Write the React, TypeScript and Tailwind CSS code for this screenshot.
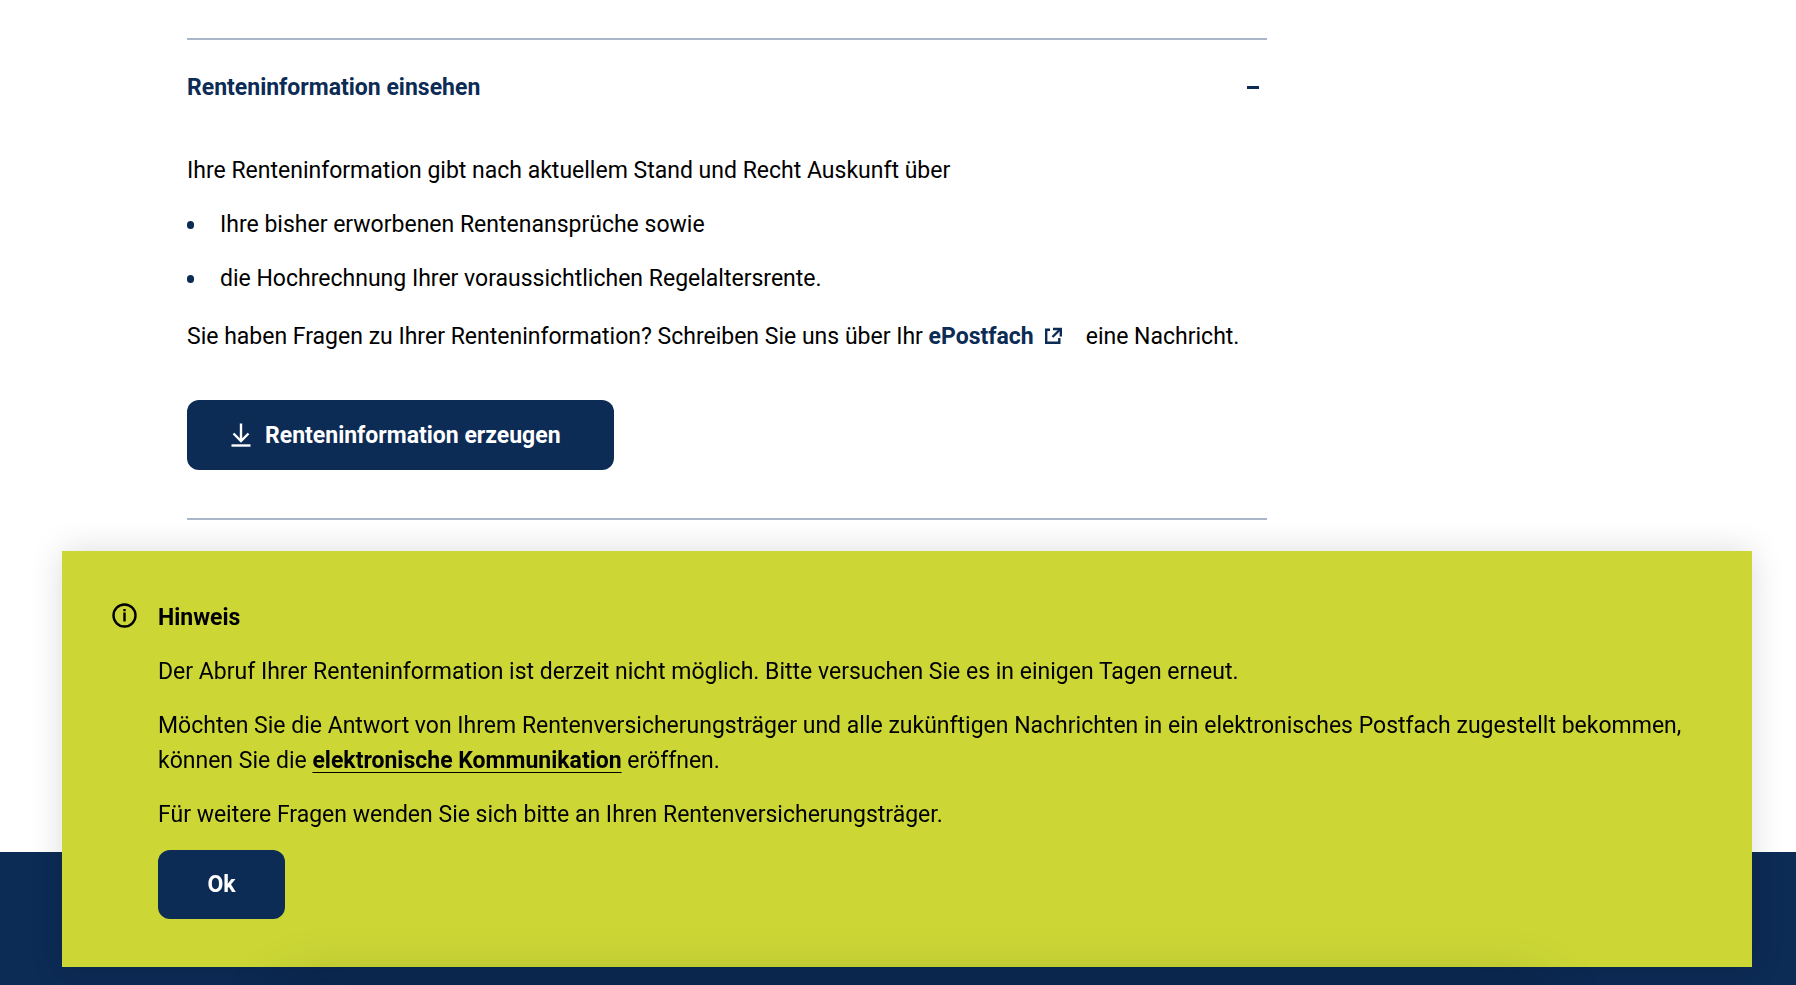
import React from 'react';

function ExternalLinkIcon() {
  return (
    <svg className="mr-6 ml-2.5 inline-block size-[18px] align-[-1px]" viewBox="0 0 18 18" fill="none" stroke="currentColor" strokeWidth="2.4" aria-hidden="true">
      <path d="M6 2.7H2.2V15.8H15.3V11" />
      <path d="M9 2h7.8v7.5" />
      <path d="M16.5 2L8.500 10" />
    </svg>
  );
}

function DownloadIcon() {
  return (
    <svg className="h-6 w-5 shrink-0" viewBox="0 0 20 24" fill="none" stroke="currentColor" strokeWidth="2.4" aria-hidden="true">
      <path d="M10 .5v17.5" />
      <path d="M2.5 10.5L10 18l7.5-7.5" />
      <path d="M.5 22.500h19" />
    </svg>
  );
}

function InfoIcon() {
  return (
    <svg className="mt-[3px] size-[25px] shrink-0" viewBox="0 0 25 25" fill="none" stroke="currentColor" strokeWidth="2.4" aria-hidden="true">
      <circle cx="12.5" cy="12.5" r="11" />
      <path d="M12.5 9.5v9M12.5 6v2.2" />
    </svg>
  );
}

export default function App() {
  return (
    <div className="flex min-h-screen flex-col bg-white font-['Roboto',sans-serif] text-[23px] leading-[35px] text-black">
      <main className="grow px-[187px] pt-[38px]">
        <section className="max-w-[1080px] border-y-2 border-[#a9b6c8] pb-12">
          <h2>
            <button
              type="button"
              aria-expanded="true"
              className="flex w-full items-center justify-between pt-[30px] pr-2 pb-12 text-left font-bold text-[#0c2b55]"
            >
              Renteninformation einsehen
              <span className="h-[3px] w-3 bg-[#0c2b55]" />
            </button>
          </h2>
          <p>Ihre Renteninformation gibt nach aktuellem Stand und Recht Auskunft über</p>
          <ul className="mt-[19px] space-y-[19px]">
            <li className="flex items-center gap-[26px]">
              <span className="h-2 w-[7px] rounded-full bg-[#0c2b55]" />
              Ihre bisher erworbenen Rentenansprüche sowie
            </li>
            <li className="flex items-center gap-[26px]">
              <span className="h-2 w-[7px] rounded-full bg-[#0c2b55]" />
              die Hochrechnung Ihrer voraussichtlichen Regelaltersrente.
            </li>
          </ul>
          <p className="mt-[23px]">
            Sie haben Fragen zu Ihrer Renteninformation? Schreiben Sie uns über Ihr{' '}
            <a href="#epostfach" className="font-bold text-[#0c2b55]">
              ePostfach
              <ExternalLinkIcon />
            </a>
            eine Nachricht.
          </p>
          <button
            type="button"
            className="mt-[46px] flex h-[70px] items-center gap-3.5 rounded-xl bg-[#0c2b55] pr-[53px] pl-11 font-bold text-white"
          >
            <DownloadIcon />
            Renteninformation erzeugen
          </button>
        </section>
      </main>

      <footer className="h-[133px] bg-[#0c2b55]" />

      {/* Notice overlay */}
      <aside
        role="alertdialog"
        aria-labelledby="hinweis-title"
        className="fixed right-11 bottom-[18px] left-[62px] flex gap-[21px] bg-[#ccd736] px-[50px] pt-[49px] pb-12 shadow-[0_0_32px_rgba(0,0,0,0.14)]"
      >
        <InfoIcon />
        <div>
          <h2 id="hinweis-title" className="font-bold">Hinweis</h2>
          <p className="mt-[19px]">
            Der Abruf Ihrer Renteninformation ist derzeit nicht möglich. Bitte versuchen Sie es in einigen Tagen erneut.
          </p>
          <p className="mt-[19px]">
            Möchten Sie die Antwort von Ihrem Rentenversicherungsträger und alle zukünftigen Nachrichten in ein elektronisches Postfach zugestellt bekommen, können Sie die{' '}
            <a href="#kommunikation" className="font-bold underline decoration-1 underline-offset-4">elektronische Kommunikation</a> eröffnen.
          </p>
          <p className="mt-[19px]">Für weitere Fragen wenden Sie sich bitte an Ihren Rentenversicherungsträger.</p>
          <button type="button" className="mt-[18px] h-[69px] w-[127px] rounded-xl bg-[#0c2b55] font-bold text-white">
            Ok
          </button>
        </div>
      </aside>

      {/* Soft shade along the bottom edge */}
      <div className="pointer-events-none fixed right-60 -bottom-20 left-68 h-20 rounded-full shadow-[0_0_60px_rgba(0,0,0,0.2)]" />
    </div>
  );
}
